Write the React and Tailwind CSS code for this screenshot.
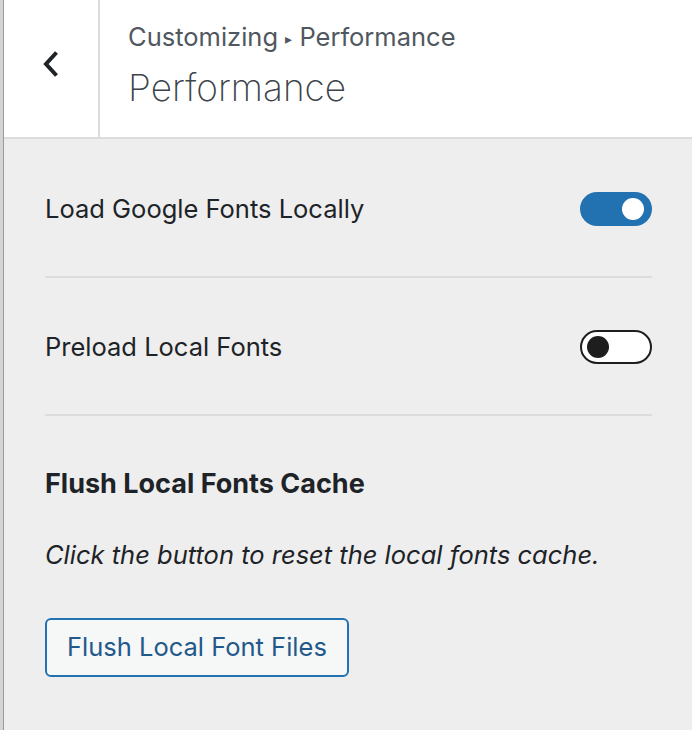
function Toggle({ on }) {
  if (on) {
    return (
      <div className="flex h-[34px] w-[72px] items-center justify-end rounded-full bg-[#2271b1] pr-[8px]">
        <div className="h-[22px] w-[22px] rounded-full bg-white" />
      </div>
    )
  }
  return (
    <div className="flex h-[34px] w-[72px] items-center rounded-full border-2 border-[#1e1e1e] bg-white pl-[5px]">
      <div className="h-[22px] w-[22px] rounded-full bg-[#1e1e1e]" />
    </div>
  )
}

export default function App() {
  return (
    <div
      className="flex h-[730px] w-[692px] bg-[#eeeeee] text-[#1d2327]"
      style={{ fontFamily: 'Inter, "Noto Sans", sans-serif' }}
    >
      {/* window edge */}
      <div className="w-[4px] border-r border-[#9a9a9a] bg-[#d4d4d4]" />

      <div className="flex flex-1 flex-col">
        {/* Header */}
        <div className="flex h-[139px] border-b-2 border-[#dcdcde] bg-white">
          <div className="flex w-[96px] justify-center border-r-2 border-[#dcdcde] pt-[50px]">
            <svg width="18" height="28" viewBox="0 0 18 28" className="text-[#1d2327]">
              <path d="M14.5 2.5 L4 14 L14.5 25.5" fill="none" stroke="currentColor" strokeWidth="4" strokeLinejoin="miter" />
            </svg>
          </div>
          <div className="pl-[28px] pt-[21px]">
            <div className="text-[25.5px] leading-[32px] text-[#50575e]">
              Customizing <span className="text-[14px] align-middle">▸</span> Performance
            </div>
            <div className="mt-[10px] text-[37px] font-extralight leading-[46px] text-[#3c434a]">
              Performance
            </div>
          </div>
        </div>

        {/* Body */}
        <div className="flex flex-col pl-[41px] pr-[40px]">
          <div className="flex items-center justify-between pt-[53px] pb-[50px]">
            <span className="text-[25.5px] leading-[34px]">Load Google Fonts Locally</span>
            <Toggle on />
          </div>
          <div className="h-[2px] bg-[#dcdcde]" />

          <div className="flex items-center justify-between pt-[52px] pb-[50px]">
            <span className="text-[25.5px] leading-[34px]">Preload Local Fonts</span>
            <Toggle />
          </div>
          <div className="h-[2px] bg-[#dcdcde]" />

          <div className="pt-[50px] text-[27px] font-bold leading-[36px]">
            Flush Local Fonts Cache
          </div>
          <div className="mt-[35px] text-[25.5px] italic leading-[36px]">
            Click the button to reset the local fonts cache.
          </div>
          <div className="mt-[45px]">
            <button className="h-[59px] rounded-[6px] border-2 border-[#2271b1] bg-[#f6f7f7] px-[20px] text-[25.5px] text-[#23598a]">
              Flush Local Font Files
            </button>
          </div>
        </div>
      </div>
    </div>
  )
}
